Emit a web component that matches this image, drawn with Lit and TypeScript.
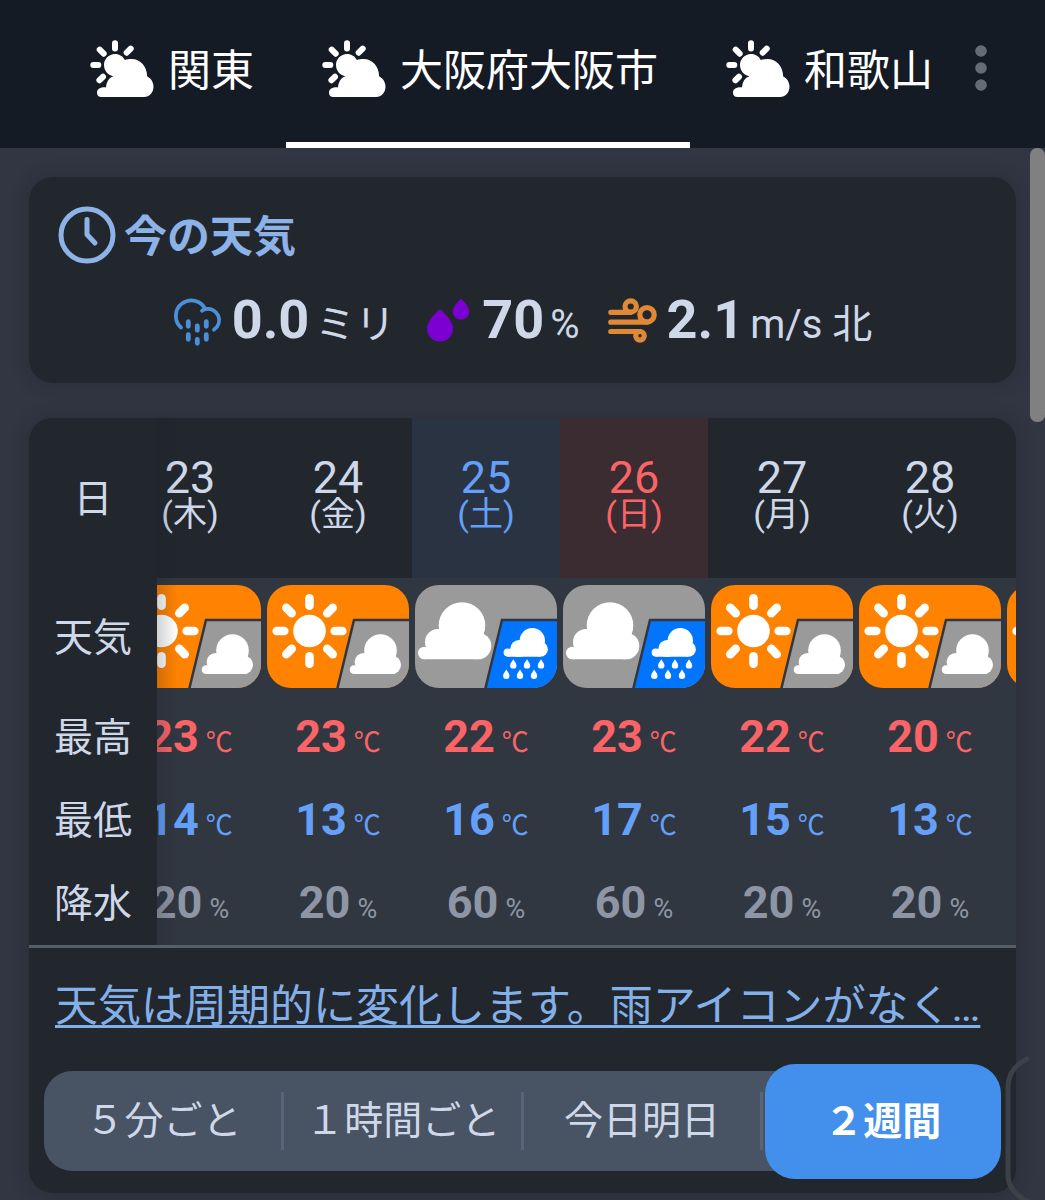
import { LitElement, html, svg, css } from "lit";
import { customElement, property, query, state } from "lit/decorators.js";
import { classMap } from "lit/directives/class-map.js";

type Sky = "sun-cloud" | "cloud-rain";

interface Day {
  date: number;
  weekday: string;
  sky: Sky;
  high: number;
  low: number;
  rain: number;
}

const PLACES = ["関東", "大阪府大阪市", "和歌山"];
const RANGES = ["５分ごと", "１時間ごと", "今日明日", "２週間"];

const DAYS: Day[] = [
  { date: 23, weekday: "木", sky: "sun-cloud", high: 23, low: 14, rain: 20 },
  { date: 24, weekday: "金", sky: "sun-cloud", high: 23, low: 13, rain: 20 },
  { date: 25, weekday: "土", sky: "cloud-rain", high: 22, low: 16, rain: 60 },
  { date: 26, weekday: "日", sky: "cloud-rain", high: 23, low: 17, rain: 60 },
  { date: 27, weekday: "月", sky: "sun-cloud", high: 22, low: 15, rain: 20 },
  { date: 28, weekday: "火", sky: "sun-cloud", high: 20, low: 13, rain: 20 },
  { date: 29, weekday: "水", sky: "sun-cloud", high: 20, low: 13, rain: 20 },
];

/* Puffy cloud, 73 x 57 units, flat base. */
const cloud = svg`
  <circle cx="44" cy="23.5" r="23.3"></circle>
  <circle cx="20" cy="40" r="13"></circle>
  <circle cx="60" cy="44" r="13.3"></circle>
  <circle cx="6.3" cy="51" r="6.3"></circle>
  <path d="M6.3 57.3V50L20 32L44 30L60 57.3Z"></path>`;

const drop = (x: number, y: number) => svg`
  <path d="M${x} ${y - 5}c1 2 3.2 3.8 3.2 6.2a3.2 3.2 0 0 1-6.4 0c0-2.400 2.200-4.200 3.200-6.200z"></path>`;

@customElement("sky-icon")
export class SkyIcon extends LitElement {
  @property() sky: Sky = "sun-cloud";

  static styles = css`
    :host {
      display: block;
    }
    .tile {
      display: block;
      width: 142px;
      height: 103px;
      margin: 0 auto;
      border-radius: 24px;
    }
  `;

  render() {
    const sunny = this.sky === "sun-cloud";
    return html`
      <svg class="tile" viewBox="0 0 142 103" role="img"
        aria-label=${sunny ? "晴れ時々曇り" : "曇り時々雨"}>
        <rect width="142" height="103" fill=${sunny ? "#ff8200" : "#9a9a9a"}></rect>
        <path d="M87 35H146V107H69.500Z" fill=${sunny ? "#9a9a9a" : "#0275ff"}
          stroke="#313640" stroke-width="2.500"></path>
        <g fill="#fff">
          ${sunny
            ? svg`
              <circle cx="42.5" cy="46" r="16.300"></circle>
              ${[0, 45, 90, 135, 180, 225, 270, 315].map(
                (a) => svg`<path d="M42.500 13.200V20.800" stroke="#fff" stroke-width="8.600"
                  stroke-linecap="round" transform="rotate(${a} 42.500 46)"></path>`
              )}
              <g transform="translate(82.700 49) scale(.7)">${cloud}</g>`
            : svg`
              <g transform="translate(3 17)">${cloud}</g>
              <circle cx="117.300" cy="55.700" r="12.700"></circle>
              <circle cx="104" cy="63.500" r="8.600"></circle>
              <circle cx="125.500" cy="64.300" r="7.400"></circle>
              <circle cx="92.700" cy="67.600" r="4.100"></circle>
              <path d="M92.700 71.700V66L104 57L117 57L125.500 71.700Z"></path>
              ${[98.3, 112, 126].map((x) => drop(x, 79.2))}
              ${[91.3, 105, 119].map((x) => drop(x, 89.6))}`}
        </g>
      </svg>
    `;
  }
}

@customElement("app-root")
export class AppRoot extends LitElement {
  @state() private place = 1;
  @state() private range = 3;
  @query(".scroller") private scroller!: HTMLElement;

  static styles = css`
    :host {
      display: block;
      box-sizing: border-box;
      min-height: 100vh;
      position: relative;
      background: #323542;
      color: #cfd8e8;
      font-family: Roboto, "Noto Sans CJK JP", sans-serif;
      overflow: hidden;
    }
    *,
    *::before,
    *::after {
      box-sizing: border-box;
    }
    button {
      font: inherit;
      color: inherit;
      background: none;
      border: 0;
      padding: 0;
      cursor: pointer;
      white-space: nowrap;
    }
    svg {
      display: block;
      flex: none;
    }

    .top {
      display: flex;
      height: 148px;
      background: #151b24;
      color: #fff;
    }
    .places {
      flex: 1;
      min-width: 0;
      display: flex;
      padding-left: 54px;
      overflow: hidden;
    }
    .place {
      flex: none;
      display: flex;
      align-items: center;
      gap: 14px;
      padding: 0 32px 0 36px;
      border-bottom: 6px solid transparent;
      font-size: 43px;
      line-height: 60px;
    }
    .place svg {
      margin-bottom: 5px;
    }
    .place.current {
      border-bottom-color: #fff;
    }
    .more {
      flex: none;
      width: 64px;
      margin: 0 32px 12px 0;
      display: flex;
      align-items: center;
      justify-content: center;
    }

    .main {
      display: flex;
      flex-direction: column;
      gap: 35px;
      padding: 29px 29px 8px;
    }
    .card {
      background: #22272e;
      border-radius: 24px;
      box-shadow: 0 0 16px rgba(34, 39, 46, 0.5);
    }

    .now {
      padding: 29px 29px 34px;
      display: flex;
      flex-direction: column;
      gap: 29px;
    }
    .title {
      display: flex;
      align-items: center;
      gap: 8px;
      height: 58px;
      margin: 0;
      font-size: 43px;
      line-height: 58px;
      font-weight: 700;
      color: #8db2e8;
    }
    .title span {
      padding-top: 4px;
    }
    .metrics {
      display: flex;
      flex-wrap: wrap;
      justify-content: center;
      gap: 0 28px;
    }
    .metric {
      display: flex;
      align-items: center;
      gap: 10px;
      height: 56px;
      font-size: 40px;
      line-height: 56px;
      white-space: nowrap;
    }
    .reading {
      padding-top: 3px;
    }
    .figure {
      font-size: 54px;
      font-weight: 700;
      margin-right: 6px;
    }

    .forecast {
      overflow: hidden;
    }
    .scroller {
      overflow-x: auto;
      scrollbar-width: none;
      border-bottom: 3px solid #565e67;
    }
    .days {
      table-layout: fixed;
      width: 100%;
      border-spacing: 0;
    }
    .labels {
      width: 128px;
    }
    .day-col {
      width: 148px;
    }
    th,
    td {
      padding: 0;
      text-align: center;
      vertical-align: middle;
      white-space: nowrap;
    }
    th {
      font-weight: 400;
      background: #22272e;
    }
    td {
      height: 83px;
      padding-top: 8px;
      background: #313741;
      line-height: 56px;
    }
    .head th {
      height: 160px;
      padding-bottom: 4px;
    }
    .sky-row td {
      height: 118px;
      padding: 0 0 1px;
    }
    .label,
    .head .label {
      position: sticky;
      left: 0;
      z-index: 1;
      padding: 1px 0 0;
      font-size: 39px;
      line-height: 56px;
    }
    .label::after {
      content: "";
      position: absolute;
      top: 0;
      bottom: 0;
      left: 100%;
      width: 20px;
      background: linear-gradient(to right, rgba(28, 32, 40, 0.2), rgba(28, 32, 40, 0));
      pointer-events: none;
    }
    .date,
    .weekday {
      display: block;
      line-height: 36px;
    }
    .date {
      font-size: 45px;
    }
    .weekday {
      font-size: 34px;
    }
    .sat {
      background: #2a3342;
      color: #649ff8;
    }
    .sun {
      background: #3b2c32;
      color: #fb6467;
    }
    .value {
      font-size: 45px;
      font-weight: 700;
      margin-right: 7px;
    }
    .unit {
      font-size: 27px;
    }
    .high {
      color: #fb6467;
    }
    .low {
      color: #649ff8;
    }
    .rain {
      color: #8e96a5;
    }

    .summary {
      padding: 29px 26px 35px;
      font-size: 43px;
      line-height: 59px;
    }
    .summary a {
      color: #84b0ea;
      text-decoration: underline;
      text-decoration-thickness: 3px;
      text-underline-offset: 4px;
      white-space: nowrap;
    }
    .ranges {
      display: grid;
      grid-template-columns: repeat(4, 1fr);
      height: 100px;
      margin: 0 15px 22px;
      border-radius: 28px;
      background: #485364;
      font-size: 39px;
      line-height: 56px;
    }
    .range {
      display: flex;
      align-items: center;
      justify-content: center;
      position: relative;
    }
    .range:not(:last-child)::after {
      content: "";
      position: absolute;
      right: -1px;
      top: 21px;
      bottom: 21px;
      width: 3px;
      background: #596476;
    }
    .range.current {
      z-index: 1;
      margin: -7px 0 -8px 3px;
      border-radius: 30px;
      background: #4290ec;
      color: #fff;
      font-weight: 700;
    }

    .scroll-thumb {
      position: absolute;
      top: 148px;
      right: 0;
      width: 15px;
      height: 274px;
      border-radius: 7px;
      background: #808080;
    }
    .edge-handle {
      position: absolute;
      right: 14px;
      bottom: 0;
    }
  `;

  protected firstUpdated() {
    this.scroller.scrollLeft = 41;
  }

  private placeIcon() {
    return html`
      <svg width="64" height="57" viewBox="0 0 64 57" fill="#fff" aria-hidden="true">
        <g stroke="#fff" stroke-width="6" stroke-linecap="round">
          <path d="M25 3.300V8.500M9.700 9.700L13.700 13.700M40.700 8.700L36.700 12.700M3.300 25H8.300M13 36.800L9.400 40.200"></path>
        </g>
        <path d="M25 14C18.800 14 14 19 14 25C14 31 18.600 35.800 23.500 36.200C18.800 37.600 16.500 42 16 47.400C11.500 47 7 48.500 7 52.500C7 55.500 8.700 57 11.500 57H54C59.500 57 63.500 52.500 63.500 46.700C63.500 42 61 38.500 57.200 36.500C57 26 50 19 41.500 19C39 19 37 19.300 34.800 20C33 16.500 29.500 14 25 14Z"></path>
      </svg>
    `;
  }

  private row(label: string, kind: string, unit: string, pick: (d: Day) => number) {
    return html`
      <tr>
        <th class="label" scope="row">${label}</th>
        ${DAYS.map(
          (d) => html`<td class=${kind}><span class="value">${pick(d)}</span><span class="unit">${unit}</span></td>`
        )}
      </tr>
    `;
  }

  render() {
    return html`
      <header class="top">
        <nav class="places" aria-label="地域">
          ${PLACES.map(
            (name, i) => html`
              <button
                class=${classMap({ place: true, current: i === this.place })}
                aria-pressed=${i === this.place ? "true" : "false"}
                @click=${() => (this.place = i)}
              >
                ${this.placeIcon()}<span>${name}</span>
              </button>
            `
          )}
        </nav>
        <button class="more" aria-label="メニュー">
          <svg width="12" height="46" viewBox="0 0 12 46" fill="#666c75" aria-hidden="true">
            <circle cx="6" cy="6" r="5.800"></circle>
            <circle cx="6" cy="23" r="5.800"></circle>
            <circle cx="6" cy="40" r="5.800"></circle>
          </svg>
        </button>
      </header>

      <main class="main">
        <section class="card now">
          <h2 class="title">
            <svg width="58" height="58" viewBox="0 0 58 58" fill="none" stroke="#8db2e8"
              stroke-width="5" stroke-linecap="round" stroke-linejoin="round" aria-hidden="true">
              <circle cx="29" cy="29" r="26"></circle>
              <path d="M29 13.500V28.500L37 37"></path>
            </svg>
            <span>今の天気</span>
          </h2>
          <div class="metrics">
            <div class="metric">
              <svg width="49" height="49" viewBox="0 0 49 49" fill="none" stroke="#4c8fd9"
                stroke-linecap="round" aria-hidden="true">
                <path stroke-width="3.800" d="M8 30.500A15.500 15.500 0 1 1 32.300 12.200A11.300 11.300 0 0 1 41 32.700M32.300 12.200C31 12.500 30 13 29 13.800"></path>
                <path stroke-width="4.800" d="M15.300 24.700V29.300M15.300 37.700V42.300M24.300 29V33.300M24.300 42.300V46.300M33.300 24.700V29.300M33.300 37.700V42.300"></path>
              </svg>
              <span class="reading"><span class="figure">0.0</span>ミリ</span>
            </div>
            <div class="metric">
              <svg width="49" height="49" viewBox="-3 -2 49 49" fill="#7d00d2" aria-hidden="true">
                <path d="M14 10.500C15.500 10.500 27 21.500 27 29.600A13 13 0 0 1 1 29.600C1 21.500 12.500 10.500 14 10.500Z"></path>
                <path d="M35 0C36 0 43.300 7.500 43.300 12.500A8.300 8.300 0 0 1 26.700 12.500C26.700 7.500 34 0 35 0Z"></path>
              </svg>
              <span class="reading"><span class="figure">70</span>%</span>
            </div>
            <div class="metric">
              <svg width="49" height="49" viewBox="0 -1 49 49" fill="none" stroke="#df8936"
                stroke-width="5.200" stroke-linecap="round" aria-hidden="true">
                <path d="M2.800 14.300H22.700M2.800 24.200H39M2.800 33.500H32"></path>
                <circle cx="22.700" cy="8.500" r="5.700"></circle>
                <circle cx="39" cy="16.800" r="7.200"></circle>
                <circle cx="32" cy="37.800" r="4.300"></circle>
              </svg>
              <span class="reading"><span class="figure">2.1</span>m/s 北</span>
            </div>
          </div>
        </section>

        <section class="card forecast">
          <div class="scroller">
            <table class="days">
              <colgroup>
                <col class="labels" />
                ${DAYS.map(() => html`<col class="day-col" />`)}
              </colgroup>
              <thead>
                <tr class="head">
                  <th class="label" scope="col">日</th>
                  ${DAYS.map(
                    (d) => html`
                      <th scope="col" class=${classMap({ sat: d.weekday === "土", sun: d.weekday === "日" })}>
                        <span class="date">${d.date}</span>
                        <span class="weekday">(${d.weekday})</span>
                      </th>
                    `
                  )}
                </tr>
              </thead>
              <tbody>
                <tr class="sky-row">
                  <th class="label" scope="row">天気</th>
                  ${DAYS.map((d) => html`<td><sky-icon .sky=${d.sky}></sky-icon></td>`)}
                </tr>
                ${this.row("最高", "high", "℃", (d) => d.high)}
                ${this.row("最低", "low", "℃", (d) => d.low)}
                ${this.row("降水", "rain", "%", (d) => d.rain)}
              </tbody>
            </table>
          </div>
          <div class="summary"><a href="#detail">天気は周期的に変化します。雨アイコンがなく…</a></div>
          <div class="ranges">
            ${RANGES.map(
              (name, i) => html`
                <button
                  class=${classMap({ range: true, current: i === this.range })}
                  aria-pressed=${i === this.range ? "true" : "false"}
                  @click=${() => (this.range = i)}
                >${name}</button>
              `
            )}
          </div>
        </section>
      </main>

      <div class="scroll-thumb"></div>
      <svg class="edge-handle" width="26" height="146" viewBox="0 0 26 146" fill="none"
        stroke="#3c4149" stroke-width="5" stroke-linecap="round" aria-hidden="true">
        <path d="M22 4C12 9 3 17 3 32V120C3 133 12 141 22 146"></path>
      </svg>
    `;
  }
}
